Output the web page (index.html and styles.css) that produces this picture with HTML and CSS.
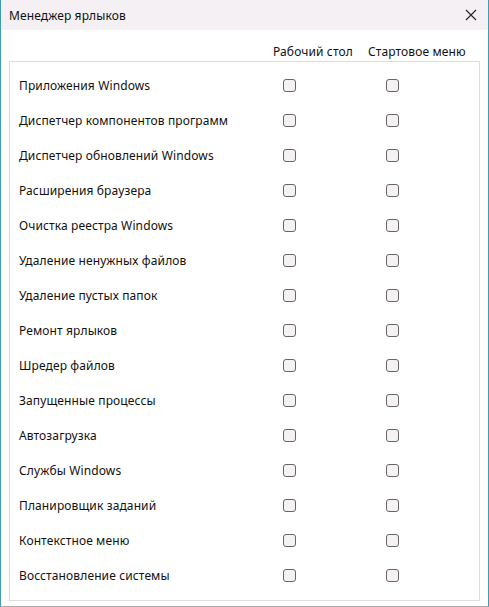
FILE: index.html
```html
<!DOCTYPE html>
<html lang="ru">
<head>
    <meta charset="UTF-8">
    <title>Менеджер ярлыков</title>
    <link rel="stylesheet" href="styles.css">
</head>
<body>
    <div class="window">
        <div class="titlebar">
            <span class="title">Менеджер ярлыков</span>
            <svg class="close" width="12" height="12" viewBox="0 0 12 12">
                <path d="M1 1 L11 11 M11 1 L1 11" stroke="#222" stroke-width="1.1" fill="none"/>
            </svg>
        </div>
        <div class="header">
            <span>Рабочий стол</span>
            <span>Стартовое меню</span>
        </div>
        <div class="panel" id="list"></div>
    </div>
    <script>
        const items = [
            'Приложения Windows',
            'Диспетчер компонентов программ',
            'Диспетчер обновлений Windows',
            'Расширения браузера',
            'Очистка реестра Windows',
            'Удаление ненужных файлов',
            'Удаление пустых папок',
            'Ремонт ярлыков',
            'Шредер файлов',
            'Запущенные процессы',
            'Автозагрузка',
            'Службы Windows',
            'Планировщик заданий',
            'Контекстное меню',
            'Восстановление системы'
        ];
        const list = document.getElementById('list');
        list.innerHTML = items.map(name => `
            <div class="row">
                <span class="label">${name}</span>
                <span class="cell"><span class="box"></span></span>
                <span class="cell"><span class="box"></span></span>
            </div>`).join('');
    </script>
</body>
</html>
```

FILE: styles.css
```css
body {
    margin: 0;
    background: #fff;
    font-family: 'Noto Sans', 'Open Sans', sans-serif;
    font-size: 12px;
    letter-spacing: 0.12px;
    color: #111;
}

.window {
    width: 487px;
    height: 606px;
    border-left: 1px solid #3f9cb8;
    border-right: 1px solid #3f9cb8;
    border-bottom: 1px solid #a9a9a9;
    background: #fff;
}

.titlebar {
    height: 30px;
    background: #f4f0f4;
    display: flex;
    align-items: center;
    justify-content: space-between;
    padding: 0 11px 0 8px;
}

.close {
    display: block;
}

.header {
    display: grid;
    grid-template-columns: auto auto;
    justify-content: start;
    column-gap: 15px;
    padding: 13px 0 0 272px;
    height: 18px;
}

.panel {
    margin: 0 0 0 8px;
    width: 469px;
    border: 1px solid #dcdcdc;
    padding-top: 6px;
    height: 532px;
}

.row {
    display: grid;
    grid-template-columns: 264px 103px 1fr;
    align-items: center;
    height: 35px;
    padding-left: 9px;
}

.cell {
    display: flex;
    align-items: center;
}

.box {
    width: 11px;
    height: 11px;
    border: 1px solid #666;
    border-radius: 3px;
    background: #f5f1f5;
}
```
